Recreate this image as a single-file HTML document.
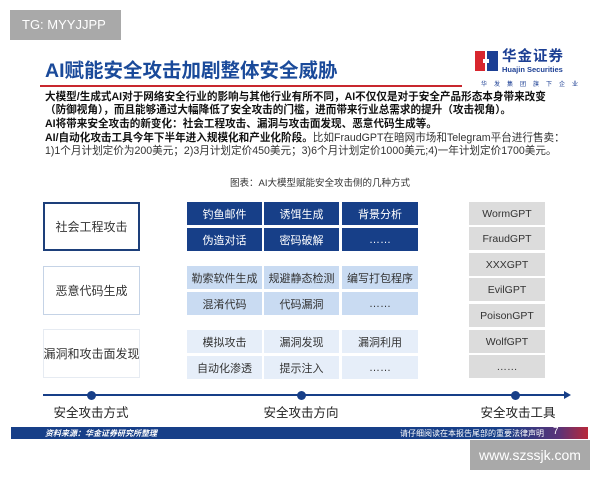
<!DOCTYPE html>
<html><head><meta charset="utf-8"><style>
*{margin:0;padding:0;box-sizing:border-box}
body{width:600px;height:480px;background:#fff;position:relative;overflow:hidden;font-family:"Liberation Sans","Noto Sans CJK SC",sans-serif;color:#222}
.a{position:absolute}
.tg{left:10px;top:10px;width:111px;height:30px;background:#a9a9a9;color:#fff;font-size:13px;line-height:30px;padding-left:12px}
.title{left:45px;top:54px;font-size:19.5px;font-weight:bold;color:#1a4a9a;white-space:nowrap}
.red{left:40px;top:85px;width:422px;height:2px;background:#c8272e}
.body{left:45px;font-size:10.6px;line-height:12px;font-weight:bold;white-space:nowrap;color:#111}
.c{display:flex;align-items:center;justify-content:center;font-size:11px;position:absolute}
.d{background:#173f88;color:#fff}
.l{background:#c9dbf2;color:#333}
.ll{background:#e6eef9;color:#333}
.g{background:#dcdcdc;color:#333;font-size:10.5px}
.lb{position:absolute;left:43px;width:97px;height:49px;display:flex;align-items:center;justify-content:center;font-size:12px;color:#333;background:#fff;white-space:nowrap}
.dot{position:absolute;width:9px;height:9px;border-radius:50%;background:#173f88;top:391px}
.ax{position:absolute;top:402px;font-size:12.5px;color:#222;transform:translateX(-50%);white-space:nowrap}
</style></head><body>
<div class="a tg">TG: MYYJJPP</div>
<div class="a title">AI赋能安全攻击加剧整体安全威胁</div>
<div class="a red"></div>
<svg class="a" style="left:475px;top:51px" width="23" height="20"><rect x="0" y="0" width="10" height="20" fill="#d8262e"/><rect x="12" y="0" width="11" height="20" fill="#1c3f94"/><rect x="8" y="8" width="6" height="4" fill="#fff"/></svg>
<div class="a" style="left:502px;top:49px;font-size:14.5px;line-height:16px;font-weight:bold;color:#1c3f94;letter-spacing:1px">华金证券</div>
<div class="a" style="left:502px;top:66px;font-size:7.5px;line-height:8px;font-weight:bold;color:#1c3f94">Huajin Securities</div>
<div class="a" style="left:481px;top:79px;font-size:6px;color:#1c3f94;letter-spacing:7px">华发集团旗下企业</div>
<div class="a body" style="top:91px">大模型/生成式AI对于网络安全行业的影响与其他行业有所不同，AI不仅仅是对于安全产品形态本身带来改变</div>
<div class="a body" style="top:104px">（防御视角），而且能够通过大幅降低了安全攻击的门槛，进而带来行业总需求的提升（攻击视角）。</div>
<div class="a body" style="top:118px">AI将带来安全攻击的新变化：社会工程攻击、漏洞与攻击面发现、恶意代码生成等。</div>
<div class="a body" style="top:132px">AI/自动化攻击工具今年下半年进入规模化和产业化阶段。<span style="font-weight:normal;color:#333">比如FraudGPT在暗网市场和Telegram平台进行售卖：</span></div>
<div class="a body" style="top:145px;font-weight:normal;color:#333">1)1个月计划定价为200美元；2)3月计划定价450美元；3)6个月计划定价1000美元;4)一年计划定价1700美元。</div>
<div class="a" style="left:230px;top:175px;font-size:9.5px;color:#333">图表：AI大模型赋能安全攻击侧的几种方式</div>

<div class="lb" style="top:202px;border:2px solid #1d3f7a">社会工程攻击</div>
<div class="lb" style="top:266px;border:1px solid #c5d3e6">恶意代码生成</div>
<div class="lb" style="top:329px;border:1px solid #e6ebf2">漏洞和攻击面发现</div>

<div class="c d" style="left:187px;top:202px;width:75px;height:23px">钓鱼邮件</div>
<div class="c d" style="left:264px;top:202px;width:75px;height:23px">诱饵生成</div>
<div class="c d" style="left:342px;top:202px;width:76px;height:23px">背景分析</div>
<div class="c d" style="left:187px;top:228px;width:75px;height:23px">伪造对话</div>
<div class="c d" style="left:264px;top:228px;width:75px;height:23px">密码破解</div>
<div class="c d" style="left:342px;top:228px;width:76px;height:23px">……</div>
<div class="c l" style="left:187px;top:266px;width:75px;height:23px">勒索软件生成</div>
<div class="c l" style="left:264px;top:266px;width:75px;height:23px">规避静态检测</div>
<div class="c l" style="left:342px;top:266px;width:76px;height:23px">编写打包程序</div>
<div class="c l" style="left:187px;top:292px;width:75px;height:23px">混淆代码</div>
<div class="c l" style="left:264px;top:292px;width:75px;height:23px">代码漏洞</div>
<div class="c l" style="left:342px;top:292px;width:76px;height:23px">……</div>
<div class="c ll" style="left:187px;top:330px;width:75px;height:23px">模拟攻击</div>
<div class="c ll" style="left:264px;top:330px;width:75px;height:23px">漏洞发现</div>
<div class="c ll" style="left:342px;top:330px;width:76px;height:23px">漏洞利用</div>
<div class="c ll" style="left:187px;top:356px;width:75px;height:23px">自动化渗透</div>
<div class="c ll" style="left:264px;top:356px;width:75px;height:23px">提示注入</div>
<div class="c ll" style="left:342px;top:356px;width:76px;height:23px">……</div>

<div class="c g" style="left:469px;top:202px;width:76px;height:23px">WormGPT</div>
<div class="c g" style="left:469px;top:227px;width:76px;height:23px">FraudGPT</div>
<div class="c g" style="left:469px;top:253px;width:76px;height:23px">XXXGPT</div>
<div class="c g" style="left:469px;top:278px;width:76px;height:23px">EvilGPT</div>
<div class="c g" style="left:469px;top:304px;width:76px;height:23px">PoisonGPT</div>
<div class="c g" style="left:469px;top:330px;width:76px;height:23px">WolfGPT</div>
<div class="c g" style="left:469px;top:355px;width:76px;height:23px">……</div>

<div class="a" style="left:43px;top:394px;width:524px;height:2px;background:#173f88"></div>
<svg class="a" style="left:564px;top:391px" width="7" height="8"><path d="M0 0 L7 4 L0 8Z" fill="#173f88"/></svg>
<div class="dot" style="left:87px"></div>
<div class="dot" style="left:297px"></div>
<div class="dot" style="left:511px"></div>
<div class="ax" style="left:91px">安全攻击方式</div>
<div class="ax" style="left:301px">安全攻击方向</div>
<div class="ax" style="left:518px">安全攻击工具</div>

<div class="a" style="left:11px;top:427px;width:577px;height:12px;background:linear-gradient(90deg,#173f88 0%,#173f88 85%,#5a3478 95%,#b8283a 100%)"></div>
<div class="a" style="left:45px;top:428px;font-size:8px;font-weight:bold;font-style:italic;color:#fff">资料来源：华金证券研究所整理</div>
<div class="a" style="left:400px;top:428px;font-size:8px;color:#fff">请仔细阅读在本报告尾部的重要法律声明</div>
<div class="a" style="left:553px;top:426px;font-size:10px;color:#fff">7</div>
<div class="a" style="left:470px;top:440px;width:120px;height:30px;background:#a9a9a9;color:#fff;font-size:14px;line-height:30px;text-align:center">www.szssjk.com</div>
</body></html>
